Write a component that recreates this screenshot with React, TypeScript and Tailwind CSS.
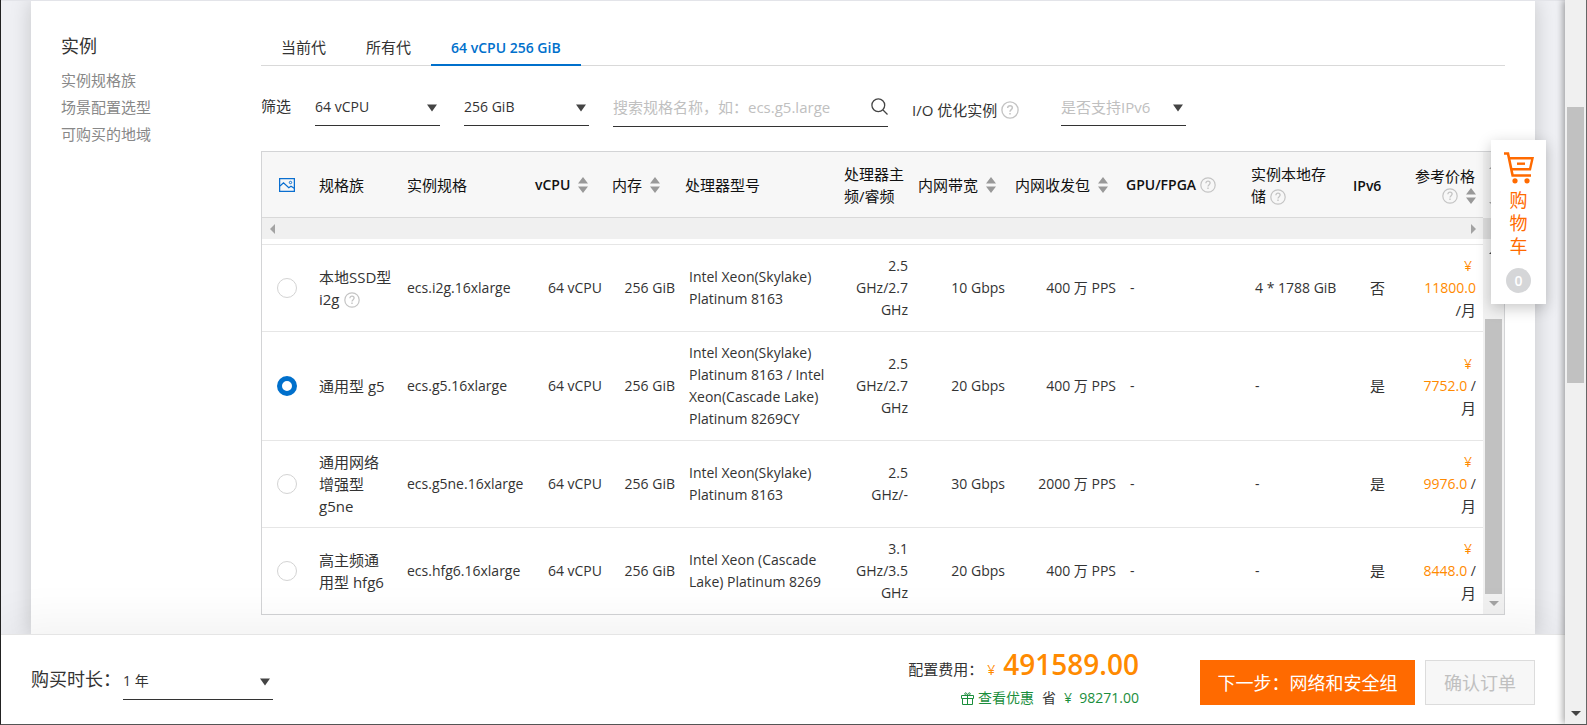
import type { ReactNode } from "react";

type Row = {
  id: string;
  family: string;
  help?: boolean;
  spec: string;
  cpu: string;
  freq: string[];
  bandwidth: string;
  pps: string;
  disk: string;
  ipv6: string;
  price: string;
  slashOnPriceLine: boolean;
};

const rows: Row[] = [
  { id: "i2g", family: "本地SSD型 i2g", help: true, spec: "ecs.i2g.16xlarge", cpu: "Intel Xeon(Skylake) Platinum 8163", freq: ["2.5", "GHz/2.7", "GHz"], bandwidth: "10 Gbps", pps: "400 万 PPS", disk: "4 * 1788 GiB", ipv6: "否", price: "11800.0", slashOnPriceLine: false },
  { id: "g5", family: "通用型 g5", spec: "ecs.g5.16xlarge", cpu: "Intel Xeon(Skylake) Platinum 8163 / Intel Xeon(Cascade Lake) Platinum 8269CY", freq: ["2.5", "GHz/2.7", "GHz"], bandwidth: "20 Gbps", pps: "400 万 PPS", disk: "-", ipv6: "是", price: "7752.0", slashOnPriceLine: true },
  { id: "g5ne", family: "通用网络增强型 g5ne", spec: "ecs.g5ne.16xlarge", cpu: "Intel Xeon(Skylake) Platinum 8163", freq: ["2.5", "GHz/-"], bandwidth: "30 Gbps", pps: "2000 万 PPS", disk: "-", ipv6: "是", price: "9976.0", slashOnPriceLine: true },
  { id: "hfg6", family: "高主频通用型 hfg6", spec: "ecs.hfg6.16xlarge", cpu: "Intel Xeon (Cascade Lake) Platinum 8269", freq: ["3.1", "GHz/3.5", "GHz"], bandwidth: "20 Gbps", pps: "400 万 PPS", disk: "-", ipv6: "是", price: "8448.0", slashOnPriceLine: true },
];

function Columns() {
  return (
    <colgroup>
      <col className="w-[50px]" />
      <col className="w-[88px]" />
      <col className="w-[128px]" />
      <col className="w-[81px]" />
      <col className="w-[73px]" />
      <col />
      <col className="w-[78px]" />
      <col className="w-[97px]" />
      <col className="w-[111px]" />
      <col className="w-[125px]" />
      <col className="w-[98px]" />
      <col className="w-[46px]" />
      <col className="w-[91px]" />
    </colgroup>
  );
}

function Help({ className = "size-4" }: { className?: string }) {
  return (
    <svg viewBox="0 0 16 16" fill="none" stroke="#c4c4c4" className={`inline-block shrink-0 ${className}`}>
      <circle cx="8" cy="8" r="7.2" strokeWidth="1.2" />
      <path d="M5.9 6.3c0-1.3.9-2.1 2.1-2.1s2.1.8 2.1 1.9c0 1.5-2.1 1.6-2.1 3.4" strokeWidth="1.3" />
      <path d="M8 10.6v1.4" strokeWidth="1.4" />
    </svg>
  );
}

function Sort() {
  return (
    <svg viewBox="0 0 10 18" fill="#999" className="inline-block h-[18px] w-[10px] shrink-0">
      <path d="M5 1l5 6.5H0zM5 17l5-6.5H0z" />
    </svg>
  );
}

function Triangle({ dir, color = "fill-[#a3a3a3]" }: { dir: "up" | "down" | "left" | "right"; color?: string }) {
  const shape = { up: "M0 8L5 3l5 5z", down: "M0 3h10L5 8z", left: "M8 0v10L3 5z", right: "M3 0v10l5-5z" }[dir];
  return (
    <svg viewBox="0 0 10 10" className={`size-[10px] shrink-0 ${color}`}>
      <path d={shape} />
    </svg>
  );
}

function Dropdown({ label, value, muted, wide }: { label: string; value: string; muted?: boolean; wide?: boolean }) {
  return (
    <div className={`relative shrink-0 border-b border-[#333] ${wide ? "w-[150px]" : "w-[125px]"}`}>
      <select
        aria-label={label}
        className={`block h-[38px] w-full appearance-none bg-transparent pt-[2px] pr-6 outline-none ${muted ? "text-[15px] text-[#c0c0c0]" : "text-sm text-[#333]"}`}
      >
        <option>{value}</option>
      </select>
      <svg viewBox="0 0 10 8" className="pointer-events-none absolute top-[17px] right-[3px] h-2 w-[10px] fill-[#444]">
        <path d="M0 .5h10L5 7.5z" />
      </svg>
    </div>
  );
}

function Th({ children, tight, center }: { children?: ReactNode; tight?: boolean; center?: boolean }) {
  return (
    <th className={`py-0 pr-0 text-left align-middle font-normal ${tight ? "pl-[3px]" : center ? "pl-0" : "pl-[7px]"}`}>
      {children}
    </th>
  );
}

function Sortable({ children }: { children: ReactNode }) {
  return (
    <span className="flex items-center gap-2 whitespace-nowrap">
      {children}
      <Sort />
    </span>
  );
}

function CartIcon() {
  return (
    <svg viewBox="0 0 30 32" fill="none" stroke="#ff6a00" className="h-8 w-[30px]">
      <path d="M0 1.500h4L8.600 23.500H27" strokeWidth="2.600" />
      <path d="M5 6.300h23.500L26 17.300H8" strokeWidth="2.400" />
      <path d="M13 11.700h8" strokeWidth="2.400" />
      <circle cx="11" cy="28.800" r="2.600" fill="#ff6a00" stroke="none" />
      <circle cx="23" cy="28.800" r="2.600" fill="#ff6a00" stroke="none" />
    </svg>
  );
}

export default function App() {
  return (
    <div className="flex h-screen overflow-hidden border-r border-b border-l border-r-[#666] border-b-[#555] border-l-[#222] bg-[#eff0f4] font-['Open_Sans','Noto_Sans_CJK_SC',sans-serif] text-sm leading-[22px] text-[#333]">
      <div className="relative flex min-w-0 flex-1 flex-col">
        <main className="min-h-0 flex-1 overflow-hidden border-t border-[#e3e4e9] pr-[30px] pl-[30px]">
          <div className="flex h-full bg-white pt-8 pr-[30px] pl-[30px] shadow-[0_0_20px_rgba(0,0,0,0.18)]">
            <nav className="w-[200px] shrink-0 text-[15px] leading-[27px] text-[#888]">
              <h2 className="mb-[7px] text-lg leading-[27px] text-[#333]">实例</h2>
              <a href="#family" className="block">实例规格族</a>
              <a href="#scene" className="block">场景配置选型</a>
              <a href="#region" className="block">可购买的地域</a>
            </nav>

            <section className="min-w-0 flex-1">
              <div role="tablist" className="flex h-[33px] border-b border-[#d9d9d9] text-[15px]">
                <button role="tab" className="h-8 px-5 pb-1">当前代</button>
                <button role="tab" className="h-8 px-5 pb-1">所有代</button>
                <button role="tab" aria-selected="true" className="h-[33px] border-b-2 border-[#0070cc] px-5 pb-[2px] text-sm font-semibold text-[#0070cc]">
                  64 vCPU 256 GiB
                </button>
              </div>

              <div className="mt-[21px] flex h-10 items-start gap-6">
                <div className="flex shrink-0 items-start gap-6">
                  <span className="pt-2 text-[15px]">筛选</span>
                  <Dropdown label="vCPU" value="64 vCPU" />
                </div>
                <Dropdown label="内存" value="256 GiB" />
                <div className="flex h-10 w-[275px] shrink-0 items-center border-b border-[#333]">
                  <input
                    aria-label="搜索规格名称"
                    placeholder="搜索规格名称，如：ecs.g5.large"
                    className="min-w-0 flex-1 bg-transparent text-[15px] outline-none placeholder:text-[#c0c0c0]"
                  />
                  <svg viewBox="0 0 17 17" fill="none" stroke="#444" strokeWidth="1.3" className="size-[17px]">
                    <circle cx="7.3" cy="7.3" r="6.4" />
                    <path d="M12 12l4.5 4.5" />
                  </svg>
                </div>
                <span className="flex w-[125px] shrink-0 items-center gap-1 pt-[12px] text-[15px] whitespace-nowrap">
                  I/O 优化实例
                  <Help className="size-[18px]" />
                </span>
                <Dropdown label="是否支持IPv6" value="是否支持IPv6" muted />
              </div>

              <div className="mt-6 border border-[#d3d4d6]">
                <div className="flex bg-[#f7f7f7]">
                  <table className="h-[66px] min-w-0 flex-1 table-fixed border-collapse border-b border-[#d9d9d9] text-[15px] text-[#111]">
                    <Columns />
                    <thead>
                      <tr>
                        <Th center>
                          <svg viewBox="0 0 16 14" fill="none" stroke="#0a6fd0" className="mx-auto h-[14px] w-4">
                            <rect x=".6" y=".6" width="14.8" height="12.8" strokeWidth="1.3" />
                            <path d="M1 8l3.5-3.3 5.3 5L12 8.200l3.200 2" strokeWidth="1.2" />
                            <circle cx="11.500" cy="4.500" r="1.200" strokeWidth="1" />
                          </svg>
                        </Th>
                        <Th>规格族</Th>
                        <Th>实例规格</Th>
                        <Th><span className="text-sm font-semibold"><Sortable>vCPU</Sortable></span></Th>
                        <Th tight><Sortable>内存</Sortable></Th>
                        <Th tight>处理器型号</Th>
                        <Th>处理器主频/睿频</Th>
                        <Th tight><Sortable>内网带宽</Sortable></Th>
                        <Th tight><Sortable>内网收发包</Sortable></Th>
                        <Th tight>
                          <span className="flex items-center gap-1 text-sm font-semibold">GPU/FPGA <Help /></span>
                        </Th>
                        <Th tight>
                          <span className="block w-[76px]">实例本地存储 <Help className="size-4 align-[-3px]" /></span>
                        </Th>
                        <Th><span className="text-sm font-semibold">IPv6</span></Th>
                        <Th>
                          <span className="block pr-2 text-right">参考价格</span>
                          <span className="flex items-center justify-end gap-2 pr-[7px]"><Help /><Sort /></span>
                        </Th>
                      </tr>
                    </thead>
                  </table>
                  <div className="flex w-[21px] flex-col items-center justify-between bg-[#f1f1f1] py-[9px]">
                    <Triangle dir="up" />
                    <Triangle dir="down" />
                  </div>
                </div>
                <div className="flex h-[21px] bg-[#f0f0f0]">
                  <div className="flex flex-1 items-center justify-between px-[5px]">
                    <Triangle dir="left" />
                    <Triangle dir="right" />
                  </div>
                  <div className="w-[21px] bg-[#dcdcdc]" />
                </div>

                <div className="flex">
                  <div className="min-w-0 flex-1 pt-[5px]">
                    <table className="w-full table-fixed border-collapse">
                      <Columns />
                      <tbody>
                        {rows.map((r) => (
                          <tr key={r.id} className="border-t border-[#e6e6e6] [&>td]:px-[7px] [&>td]:py-[10px]">
                            <td>
                              <input
                                type="radio"
                                name="instance"
                                aria-label={r.spec}
                                defaultChecked={r.id === "g5"}
                                className="mx-auto block size-5 appearance-none rounded-full border border-[#d3d3d3] bg-white checked:border-[5px] checked:border-[#0070cc]"
                              />
                            </td>
                            <td className="text-[15px]">
                              {r.family}
                              {r.help && <Help className="ml-1 size-4 align-[-3px]" />}
                            </td>
                            <td className="whitespace-nowrap">{r.spec}</td>
                            <td className="text-right whitespace-nowrap">64 vCPU</td>
                            <td className="text-right whitespace-nowrap">256 GiB</td>
                            <td>{r.cpu}</td>
                            <td className="text-right">
                              {r.freq.map((line) => (
                                <span key={line} className="block">{line}</span>
                              ))}
                            </td>
                            <td className="text-right whitespace-nowrap">{r.bandwidth}</td>
                            <td className="text-right whitespace-nowrap">{r.pps}</td>
                            <td>-</td>
                            <td className="whitespace-nowrap">{r.disk}</td>
                            <td className="text-right text-[15px]">{r.ipv6}</td>
                            <td className="text-right">
                              <span className="block pr-1 text-[#ff8a00]">¥</span>
                              <span className="block">
                                <span className="text-[#ff8a00]">{r.price}</span>
                                {r.slashOnPriceLine && " /"}
                              </span>
                              <span className="block text-[15px]">{r.slashOnPriceLine ? "月" : "/月"}</span>
                            </td>
                          </tr>
                        ))}
                      </tbody>
                    </table>
                  </div>
                  <div className="flex w-[21px] flex-col items-center bg-[#f1f1f1] pt-[7px] pb-[6px]">
                    <Triangle dir="up" color="fill-[#444]" />
                    <div className="mt-[63px] mb-1 w-[17px] flex-1 bg-[#c1c1c1]" />
                    <Triangle dir="down" />
                  </div>
                </div>
              </div>
            </section>
          </div>
        </main>

        <footer className="z-10 flex h-[90px] shrink-0 items-start border-t border-[#e5e5e5] bg-white pr-[30px] pl-[30px] shadow-[0_-10px_50px_rgba(0,0,0,0.06)]">
          <span className="pt-[33px] text-lg leading-[22px]">购买时长：</span>
          <div className="ml-[2px] pt-[26px]">
            <Dropdown label="购买时长" value="1 年" wide />
          </div>
          <div className="ml-auto pt-[13px] text-right">
            <p className="flex items-baseline justify-end leading-8">
              <span className="text-[15px]">配置费用：</span>
              <span className="mr-2 ml-1 text-[#ff8a00]">¥</span>
              <strong className="text-[28px] font-semibold text-[#ff8a00]">491589.00</strong>
            </p>
            <p className="mt-[2px] flex items-center justify-end gap-2 text-sm">
              <a href="#discount" className="flex items-center gap-1 text-[#1a8e3c]">
                <svg viewBox="0 0 13 13" fill="none" stroke="currentColor" strokeWidth="1" className="size-[13px]">
                  <path d="M.5 3.500h12v3H.5zM1.500 6.500v6h10v-6M6.500 3.500v9M6.500 3.500C5 3.500 3.500 2.500 3.800 1.300 4.500 0 6.300 1.500 6.500 3.500c.2-2 2-3.500 2.700-2.200C9.500 2.500 8 3.500 6.500 3.500z" />
                </svg>
                查看优惠
              </a>
              <span>省</span>
              <span className="text-[#1a8e3c]">¥&nbsp; 98271.00</span>
            </p>
          </div>
          <button className="mt-[25px] ml-[61px] h-[45px] w-[215px] bg-[#ff6a00] text-lg text-white">下一步：网络和安全组</button>
          <button disabled className="mt-[25px] ml-[10px] h-[45px] w-[110px] border border-[#dcdcdc] bg-[#f7f7f7] text-lg text-[#c0c0c0]">
            确认订单
          </button>
        </footer>

        <a
          href="#cart"
          className="absolute top-[140px] right-[19px] z-20 flex h-[164px] w-[55px] flex-col items-center bg-white pt-3 text-lg leading-[23px] text-[#ff6a00] shadow-[0_4px_14px_rgba(0,0,0,0.22)]"
        >
          <CartIcon />
          <span className="mt-[5px] w-[18px] text-center">购物车</span>
          <span className="mt-[10px] flex size-[25px] items-center justify-center rounded-full bg-[#d5d6d8] text-sm font-semibold text-white">0</span>
        </a>
      </div>

      <div className="z-30 flex w-[21px] shrink-0 flex-col items-center bg-[#f0f0f0] pt-[107px] pb-[6px] shadow-[-2px_0_7px_rgba(0,0,0,0.35)]">
        <div className="h-[276px] w-[17px] bg-[#c1c1c1]" />
        <div className="flex-1" />
        <Triangle dir="down" color="fill-[#444]" />
      </div>
    </div>
  );
}
